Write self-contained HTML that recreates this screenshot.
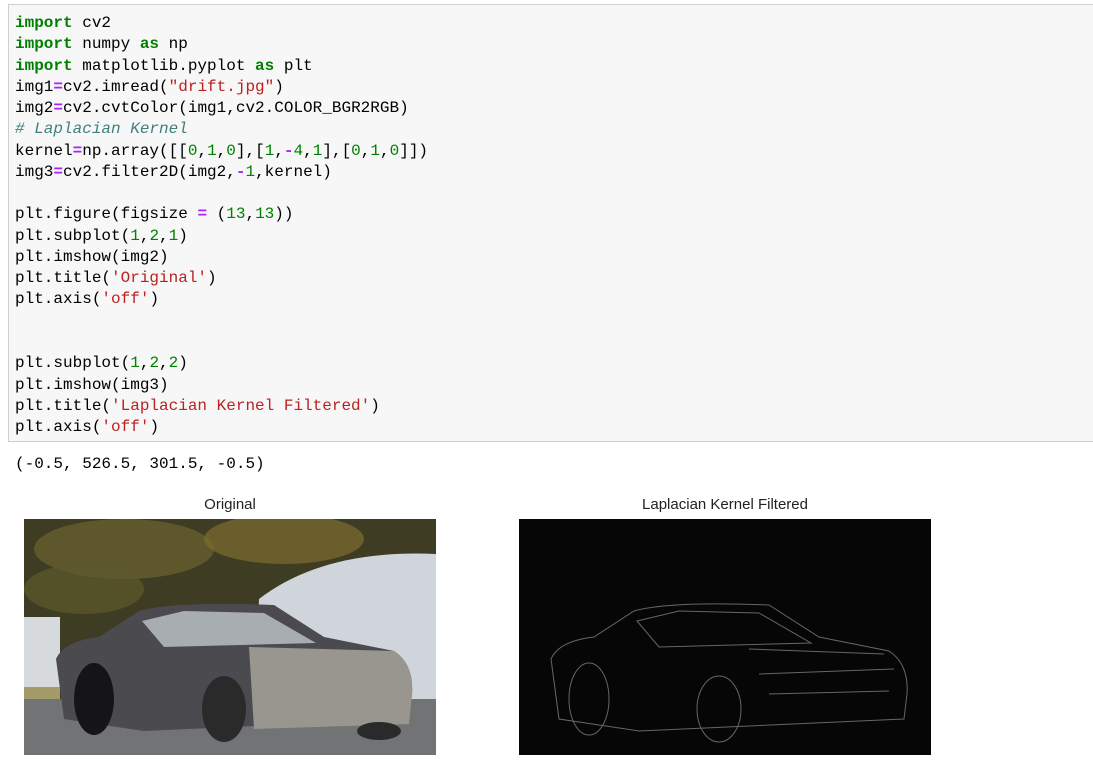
<!DOCTYPE html>
<html><head><meta charset="utf-8"><style>
body{margin:0;background:#fff;width:1093px;height:780px;overflow:hidden;position:relative;font-family:"Liberation Sans",sans-serif}
.cell{position:absolute;left:8px;top:4px;width:1090px;height:438px;background:#f7f7f7;border:1px solid #cfcfcf;box-sizing:border-box}
pre{margin:0;position:absolute;left:6px;top:8px;font-family:"Liberation Mono",monospace;font-size:16px;line-height:21.26px;color:#000}
.k{color:#008000;font-weight:bold}.o{color:#aa22ff;font-weight:bold}.s{color:#ba2121}.n{color:#008000}.c{color:#408080;font-style:italic}
.out{position:absolute;left:15px;top:455px;font-family:"Liberation Mono",monospace;font-size:16px;color:#000}
.t{position:absolute;top:496px;font-size:15px;color:#222;text-align:center;width:412px}
svg{position:absolute;top:519px}
</style></head><body>
<div class="cell"><pre><span class="k">import</span> cv2
<span class="k">import</span> numpy <span class="k">as</span> np
<span class="k">import</span> matplotlib.pyplot <span class="k">as</span> plt
img1<span class="o">=</span>cv2.imread(<span class="s">"drift.jpg"</span>)
img2<span class="o">=</span>cv2.cvtColor(img1,cv2.COLOR_BGR2RGB)
<span class="c"># Laplacian Kernel</span>
kernel<span class="o">=</span>np.array([[<span class="n">0</span>,<span class="n">1</span>,<span class="n">0</span>],[<span class="n">1</span>,<span class="o">-</span><span class="n">4</span>,<span class="n">1</span>],[<span class="n">0</span>,<span class="n">1</span>,<span class="n">0</span>]])
img3<span class="o">=</span>cv2.filter2D(img2,<span class="o">-</span><span class="n">1</span>,kernel)

plt.figure(figsize <span class="o">=</span> (<span class="n">13</span>,<span class="n">13</span>))
plt.subplot(<span class="n">1</span>,<span class="n">2</span>,<span class="n">1</span>)
plt.imshow(img2)
plt.title(<span class="s">'Original'</span>)
plt.axis(<span class="s">'off'</span>)


plt.subplot(<span class="n">1</span>,<span class="n">2</span>,<span class="n">2</span>)
plt.imshow(img3)
plt.title(<span class="s">'Laplacian Kernel Filtered'</span>)
plt.axis(<span class="s">'off'</span>)</pre></div>
<div class="out">(-0.5, 526.5, 301.5, -0.5)</div>
<div class="t" style="left:24px">Original</div>
<div class="t" style="left:519px">Laplacian Kernel Filtered</div>
<svg style="left:24px" width="412" height="236" viewBox="0 0 412 236">
<rect width="412" height="236" fill="#3e3c22"/>
<ellipse cx="100" cy="30" rx="90" ry="30" fill="#6e6230" opacity=".7"/>
<ellipse cx="260" cy="20" rx="80" ry="25" fill="#7d6c30" opacity=".7"/>
<ellipse cx="60" cy="70" rx="60" ry="25" fill="#5e5a2c" opacity=".7"/>
<path d="M235 80 Q300 30 412 35 L412 205 L230 205 Z" fill="#cfd5da"/>
<rect x="0" y="98" width="36" height="70" fill="#d6dadc"/>
<rect x="0" y="168" width="36" height="14" fill="#a49a6a"/>
<rect x="0" y="180" width="412" height="56" fill="#727375"/>
<path d="M32 140 Q40 122 75 118 L115 92 Q150 82 250 86 L300 118 L370 132 Q390 145 388 175 L385 200 L120 212 L40 200 Z" fill="#4a4a4f"/>
<path d="M225 128 L370 132 Q390 145 388 175 L385 205 L230 210 Z" fill="#98968f"/>
<path d="M118 102 L160 92 L240 94 L292 124 L140 128 Z" fill="#a8adb2"/>
<ellipse cx="70" cy="180" rx="20" ry="36" fill="#151517"/>
<ellipse cx="200" cy="190" rx="22" ry="33" fill="#2a2a2a"/>
<ellipse cx="355" cy="212" rx="22" ry="9" fill="#2a2a2a"/>
</svg>
<svg style="left:519px" width="412" height="236" viewBox="0 0 412 236">
<rect width="412" height="236" fill="#060606"/>
<g fill="none" stroke="#777" stroke-width="1" opacity=".85">
<path d="M32 140 Q40 122 75 118 L115 92 Q150 82 250 86 L300 118 L370 132 Q390 145 388 175 L385 200 L120 212 L40 200 Z"/>
<path d="M118 102 L160 92 L240 94 L292 124 L140 128 Z"/>
<ellipse cx="70" cy="180" rx="20" ry="36"/><ellipse cx="200" cy="190" rx="22" ry="33"/>
<path d="M230 130 L365 135 M240 155 L375 150 M250 175 L370 172"/>
</g>
</svg>
</body></html>
